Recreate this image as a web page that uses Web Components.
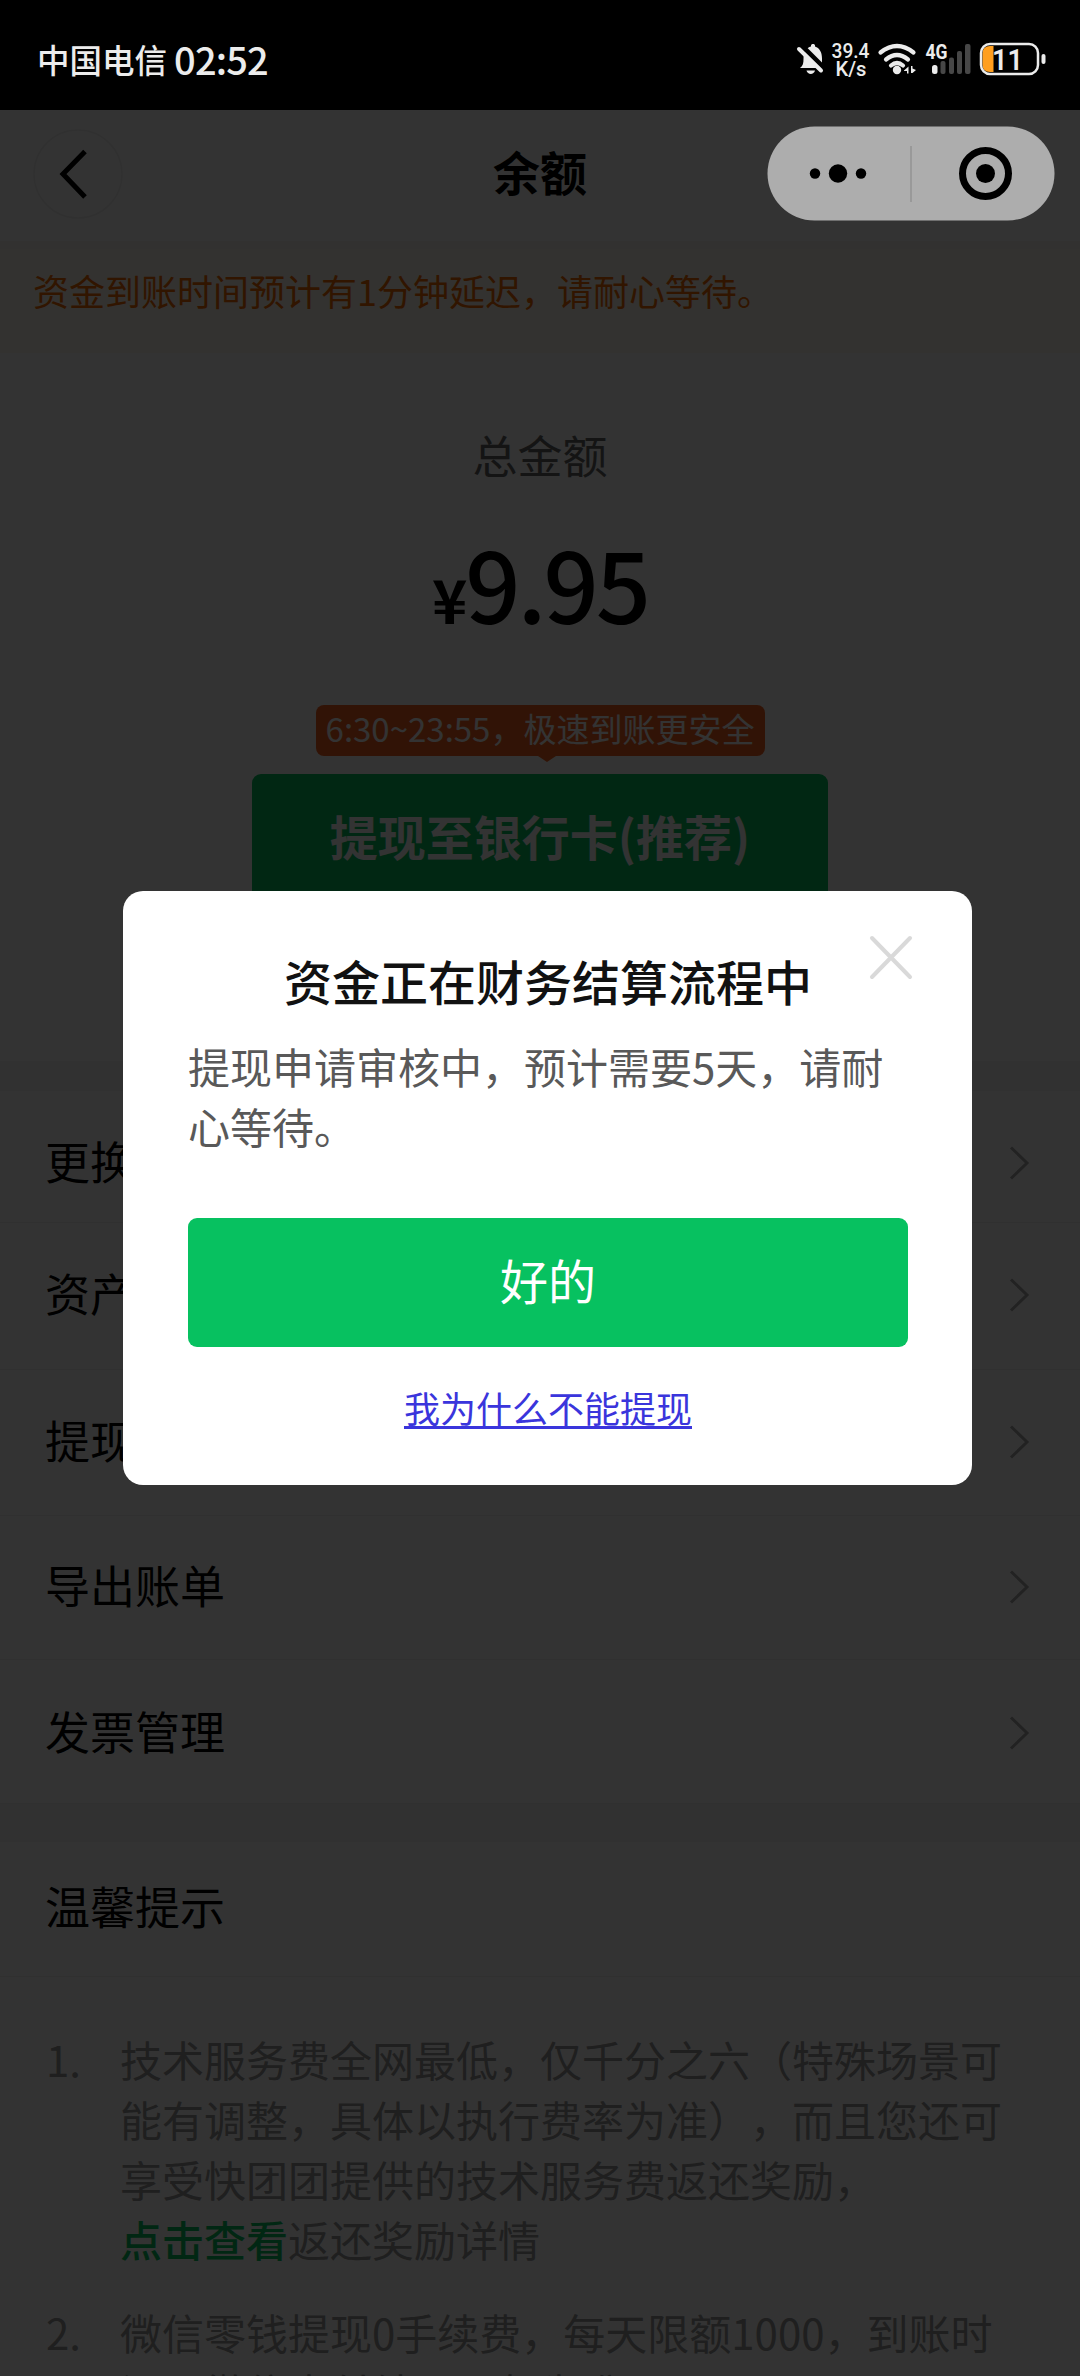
<!DOCTYPE html>
<html lang="zh-CN">
<head>
<meta charset="utf-8">
<title>余额</title>
<style>
html,body{margin:0;padding:0;background:#fff}
body{width:1080px;height:2376px;overflow:hidden;font-family:"Noto Sans CJK SC","Noto Sans",sans-serif;text-spacing-trim:space-all}
</style>
</head>
<body>
<balance-app></balance-app>
<script>
function define(name, html){
  const t=document.createElement('template');
  t.innerHTML=html;
  customElements.define(name, class extends HTMLElement{
    constructor(){
      super();
      this.attachShadow({mode:'open'}).appendChild(t.content.cloneNode(true));
    }
  });
}

define('status-bar', `
<style>
:host{display:flex;height:110px;box-sizing:border-box;background:#000;color:#ececec;align-items:center;justify-content:space-between;padding:8px 33px 0 37px}
.left{display:flex;align-items:center;white-space:nowrap}
.carrier{font-size:32.5px;font-weight:500;line-height:40px}
.time{font-size:38px;font-weight:500;line-height:40px;margin-left:7px;letter-spacing:-.8px}
svg{display:block;overflow:visible}
text{font-family:Roboto,sans-serif;font-weight:500;fill:#ececec}
</style>
<div class="left"><span class="carrier">中国电信</span><span class="time">02:52</span></div>
<svg width="253" height="40" viewBox="794 39 253 40">
  <g fill="#ececec">
    <path d="M800 68c3-2 3.500-5 3.500-9 0-7 3-11.500 7.500-12.500v-1c0-2 4-2 4 0v1c4.500 1.500 7 5.500 7 12v6l1.500 3.500z"/>
    <path d="M806.500 70.500h8.500c-1 4.500-7.500 4.500-8.500 0z"/>
  </g>
  <path d="M801 45L826 70" stroke="#000" stroke-width="5"/>
  <path d="M799 49L821 70.500" stroke="#ececec" stroke-width="4" stroke-linecap="round"/>
  <text x="831.500" y="58" font-size="19.500" textLength="38" lengthAdjust="spacingAndGlyphs">39.4</text>
  <text x="835.500" y="76" font-size="19.500" textLength="31" lengthAdjust="spacingAndGlyphs">K/s</text>
  <g fill="none" stroke="#ececec" stroke-width="4.200" stroke-linecap="round">
    <path d="M880.500 52.500Q897 39.500 913.500 52.500"/>
    <path d="M886 59.500Q897 50.500 908 59.500"/>
    <path d="M891 65.500Q897 60.500 903 65.500"/>
  </g>
  <circle cx="897" cy="70" r="4.200" fill="#ececec"/>
  <path d="M904 70.500l4.500-4v7h-1.500v-2.500h-3zM911 66l1.500 0v2.500l3.500 1.500-3.500 3h-1.500z" fill="#ececec"/>
  <text x="925.500" y="59" font-size="20" textLength="22" lengthAdjust="spacingAndGlyphs" style="font-weight:700">4G</text>
  <rect x="932" y="65" width="5.500" height="9" rx="2.500" fill="#ececec"/>
  <g fill="#474747">
    <rect x="940.500" y="61" width="5" height="13" rx="2"/><rect x="949" y="57.500" width="5" height="16.500" rx="2"/>
    <rect x="957" y="51" width="5" height="23" rx="2"/><rect x="965" y="44" width="5.500" height="30" rx="2"/>
  </g>
  <path d="M993.500 46h-3.500q-7.500 0-7.500 7.500v11q0 7.500 7.500 7.500h3.500z" fill="#ff9f1f"/>
  <rect x="981" y="44" width="57" height="30" rx="9" fill="none" stroke="#ececec" stroke-width="2.500"/>
  <rect x="1041.500" y="54" width="4" height="10" rx="2" fill="#ececec"/>
  <text x="992" y="69.500" font-size="29" textLength="31" lengthAdjust="spacingAndGlyphs" style="font-weight:600">11</text>
</svg>`);

define('nav-header', `
<style>
:host{display:grid;grid-template-columns:1fr auto 1fr;align-items:center;height:131px;box-sizing:border-box;padding:0 33px 4px;background:#fff;color:#000}
svg{display:block}
.title{font-size:47px;font-weight:700;line-height:60px;margin-top:-5px}
</style>
<svg width="92" height="94" viewBox="0 0 92 94"><circle cx="45" cy="47" r="44" fill="none" stroke="#f0f0f0" stroke-width="1.500"/><path d="M52 24.500L30 47L52 70" fill="none" stroke="#000" stroke-width="5"/></svg>
<span class="title"><slot></slot></span><span></span>`);

define('mini-capsule', `
<style>
:host{display:block;width:288px;height:95px}
svg{display:block}
</style>
<svg width="288" height="95" viewBox="0 0 288 95">
<rect x=".5" y=".5" width="287" height="94" rx="47" fill="#adadad"/>
<rect x="143" y="20" width="2" height="56" fill="#999"/>
<circle cx="48" cy="47.500" r="5.200"/><circle cx="71" cy="47.500" r="9.200"/><circle cx="94" cy="47.500" r="5.200"/>
<circle cx="218.500" cy="47.500" r="23" fill="none" stroke="#000" stroke-width="7"/><circle cx="218.500" cy="47.500" r="9.500"/>
</svg>`);

define('notice-bar', `
<style>
:host{display:flex;height:112px;box-sizing:border-box;padding:23px 33px 0;background:linear-gradient(#faf6ee 0,#faf6ee 8px,#fffbef 8px);color:#f56a00;font-size:36px;line-height:52px;white-space:nowrap}
</style><slot></slot>`);

define('balance-panel', `
<style>
:host{display:flex;flex-direction:column;align-items:center;height:708px;background:#fff;box-sizing:border-box;padding-top:72px}
.label{font-size:45px;line-height:60px;color:#666}
.amount{display:flex;align-items:baseline;margin-top:30px;height:134px;line-height:134px;color:#000;font-weight:500}
.yen{font-size:60px;letter-spacing:-2px;font-weight:600}
.num{font-size:97px;letter-spacing:-3px;font-weight:500}
.tip{display:flex;flex-direction:column;align-items:center;margin-top:56px}
.bubble{width:449px;height:51px;border-radius:8px;background:#f5601e;color:#fff;font-size:33px;line-height:47px;text-align:center;white-space:nowrap}
.arrow{width:0;height:0;margin-left:14px;border:9px solid transparent;border-top:6px solid #f5601e;border-bottom:0}
.btn{width:576px;height:128px;margin-top:12px;border-radius:9px;background:#07c160;color:#fff;font-size:48px;font-weight:700;line-height:122px;text-align:center}
</style>
<div class="label">总金额</div>
<div class="amount"><span class="yen">¥</span><span class="num">9.95</span></div>
<div class="tip"><div class="bubble">6:30~23:55，极速到账更安全</div><div class="arrow"></div></div>
<div class="btn">提现至银行卡(推荐)</div>`);

define('menu-row', `
<style>
:host{display:flex;align-items:center;justify-content:space-between;height:var(--h,145px);box-sizing:border-box;padding:var(--pt,0) 50px var(--pb,0) 45px;border-bottom:1px solid #ededed;background:#fff;color:#000;font-size:45px;line-height:60px}
svg{display:block;margin-top:4px}
</style>
<span><slot></slot></span>
<svg width="22" height="38" viewBox="0 0 22 38"><path d="M3 3.500L19 19L3 34.500" fill="none" stroke="#aaa" stroke-width="3"/></svg>`);

define('tip-item', `
<style>
:host{display:flex;color:#999;font-size:42px;line-height:60px;white-space:nowrap}
.n{width:74px;flex:none}
</style>
<span class="n"><slot name="n"></slot></span><div><slot></slot></div>`);

define('tips-panel', `
<style>
:host{display:block;background:#fff}
.head{height:135px;box-sizing:border-box;padding:34px 45px 0;border-bottom:1px solid #ededed;font-size:45px;line-height:60px;color:#000}
.list{display:flex;flex-direction:column;gap:33px;padding:52px 45px 0 46px}
.link{color:#07c160;font-weight:500}
</style>
<div class="head">温馨提示</div>
<div class="list">
<tip-item><span slot="n">1.</span>技术服务费全网最低，仅千分之六（特殊场景可<br>能有调整，具体以执行费率为准），而且您还可<br>享受快团团提供的技术服务费返还奖励，<br><span class="link">点击查看</span>返还奖励详情</tip-item>
<tip-item><span slot="n">2.</span>微信零钱提现0手续费，每天限额1000，到账时<br>间以微信支付结果一般为准</tip-item>
</div>`);

define('dialog-card', `
<style>
:host{display:flex;flex-direction:column;width:849px;height:594px;box-sizing:border-box;padding:57px 64px 0 65px;border-radius:20px;background:#fff;position:relative}
.title{font-size:48px;line-height:64px;font-weight:500;color:#111;text-align:center;white-space:nowrap}
.body{margin-top:24px;font-size:42px;line-height:60px;color:#595959;white-space:nowrap}
.ok{margin-top:62px;height:129px;border-radius:9px;background:#07c160;color:#fff;font-size:48px;line-height:122px;text-align:center}
.why{margin-top:33px;text-align:center;font-size:36px;line-height:54px;color:#3a35dc;text-decoration:underline;text-decoration-thickness:3px;text-underline-offset:3px}
.x{position:absolute;right:59px;top:44px}
</style>
<svg class="x" width="44" height="46" viewBox="0 0 44 46"><path d="M3 3L41 42M41 3L3 42" stroke="#d9d9d9" stroke-width="4" stroke-linecap="round"/></svg>
<div class="title">资金正在财务结算流程中</div>
<div class="body">提现申请审核中，预计需要5天，请耐<br>心等待。</div>
<div class="ok">好的</div>
<div class="why">我为什么不能提现</div>`);

define('balance-app', `
<style>
:host{display:flex;flex-direction:column;position:relative;width:1080px;height:2376px;overflow:hidden;background:#fff}
:host>*{flex:none}
.gap1{height:30px;background:#f3f3f3}
.gap2{height:38px;background:#f3f3f3}
.mask{position:absolute;left:0;top:110px;right:0;bottom:0;background:rgba(0,0,0,.8)}
dialog-card{position:absolute;left:123px;top:891px}
mini-capsule{position:absolute;right:25px;top:126px}
</style>
<status-bar></status-bar>
<nav-header>余额</nav-header>
<notice-bar>资金到账时间预计有1分钟延迟，请耐心等待。</notice-bar>
<balance-panel></balance-panel>
<div class="gap1"></div>
<menu-row style="--h:132px;--pt:8px">更换</menu-row>
<menu-row style="--h:147px;--pb:6px">资产</menu-row>
<menu-row style="--h:146px;--pb:6px">提现</menu-row>
<menu-row style="--h:144px;--pb:5px">导出账单</menu-row>
<menu-row style="--h:144px;--pb:1px">发票管理</menu-row>
<div class="gap2"></div>
<tips-panel></tips-panel>
<div class="mask"></div>
<dialog-card></dialog-card>
<mini-capsule></mini-capsule>`);
</script>
</body>
</html>
